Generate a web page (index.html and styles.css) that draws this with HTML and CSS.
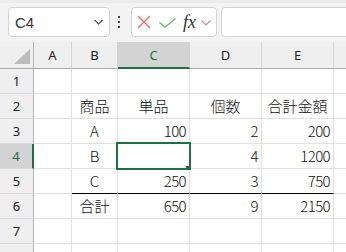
FILE: index.html
```html
<!DOCTYPE html>
<html lang="ja">
<head>
    <meta charset="UTF-8">
    <title>Sheet</title>
    <link rel="stylesheet" href="styles.css">
</head>
<body>
    <div class="toolbar">
        <div class="namebox">
            <span>C4</span>
            <svg class="caret" width="9" height="6" viewBox="0 0 9 6"><path d="M0.5 0.8 L4.5 4.8 L8.5 0.8" fill="none" stroke="#444" stroke-width="1.2"/></svg>
        </div>
        <div class="grip"><i></i><i></i><i></i></div>
        <div class="fbtns">
            <svg class="cancel" width="14" height="14" viewBox="0 0 14 14"><path d="M1 1 L13 13 M13 1 L1 13" stroke="#e86a6a" stroke-width="1.3" fill="none"/></svg>
            <svg class="enter" width="17" height="10" viewBox="0 0 17 10"><path d="M0.5 4.5 L6 9.2 L16.5 0.6" stroke="#5cb86a" stroke-width="1.3" fill="none"/></svg>
            <span class="fx">fx</span>
            <svg class="fxcaret" width="10" height="6" viewBox="0 0 10 6"><path d="M0.5 0.7 L5 5 L9.5 0.7" fill="none" stroke="#9a9a9a" stroke-width="1.1"/></svg>
        </div>
        <div class="finput"></div>
    </div>

    <div class="sheet">
        <div class="corner"><svg width="17" height="16" viewBox="0 0 17 16"><polygon points="16,0 16,15 0,15" fill="#bdbdbd"/></svg></div>
        <div class="hd">A</div>
        <div class="hd">B</div>
        <div class="hd active">C</div>
        <div class="hd">D</div>
        <div class="hd">E</div>
        <div class="hd"></div>

        <div class="rh">1</div>
        <div class="c"></div><div class="c"></div><div class="c"></div><div class="c"></div><div class="c"></div><div class="c"></div>

        <div class="rh">2</div>
        <div class="c"></div>
        <div class="c ctr">商品</div>
        <div class="c ctr">単品</div>
        <div class="c ctr">個数</div>
        <div class="c ctr">合計金額</div>
        <div class="c"></div>

        <div class="rh">3</div>
        <div class="c"></div>
        <div class="c ctr">A</div>
        <div class="c num">100</div>
        <div class="c num">2</div>
        <div class="c num">200</div>
        <div class="c"></div>

        <div class="rh active">4</div>
        <div class="c"></div>
        <div class="c ctr">B</div>
        <div class="c num"></div>
        <div class="c num">4</div>
        <div class="c num">1200</div>
        <div class="c"></div>

        <div class="rh">5</div>
        <div class="c"></div>
        <div class="c ctr rule">C</div>
        <div class="c num rule">250</div>
        <div class="c num rule">3</div>
        <div class="c num rule">750</div>
        <div class="c"></div>

        <div class="rh">6</div>
        <div class="c"></div>
        <div class="c ctr">合計</div>
        <div class="c num">650</div>
        <div class="c num">9</div>
        <div class="c num">2150</div>
        <div class="c"></div>

        <div class="rh">7</div>
        <div class="c"></div><div class="c"></div><div class="c"></div><div class="c"></div><div class="c"></div><div class="c"></div>

        <div class="rh"></div>
        <div class="c"></div><div class="c"></div><div class="c"></div><div class="c"></div><div class="c"></div><div class="c"></div>

        <div class="cursor"><i class="handle"></i></div>
    </div>
</body>
</html>
```

FILE: styles.css
```css
body {
    margin: 0;
    width: 346px;
    height: 252px;
    overflow: hidden;
    background-color: #ffffff;
    font-family: 'Noto Sans', sans-serif;
}
.toolbar {
    height: 42px;
    box-sizing: border-box;
    display: flex;
    align-items: flex-start;
    padding: 4px 0 0 8px;
    background-color: #f3f3f3;
    border-top: 3px solid #ebebeb;
    white-space: nowrap;
    overflow: hidden;
}
.namebox {
    width: 102px;
    height: 30px;
    box-sizing: border-box;
    flex-shrink: 0;
    display: flex;
    align-items: center;
    justify-content: space-between;
    padding: 0 6px;
    background-color: #ffffff;
    border: 1px solid #d4d4d4;
    border-radius: 4px;
    font-family: 'Liberation Sans', sans-serif;
    font-size: 15px;
    color: #333;
}
.grip {
    width: 2px;
    height: 30px;
    flex-shrink: 0;
    display: flex;
    flex-direction: column;
    justify-content: center;
    gap: 3px;
    margin: 0 11px 0 8px;
}
.grip i {
    display: block;
    width: 2px;
    height: 2px;
    background-color: #444;
}
.fbtns {
    width: 86px;
    height: 30px;
    box-sizing: border-box;
    flex-shrink: 0;
    display: flex;
    align-items: center;
    background-color: #ffffff;
    border: 1px solid #d4d4d4;
    border-radius: 4px;
}
.cancel {
    margin-left: 5px;
}
.enter {
    margin-left: 8px;
    margin-top: 1px;
}
.fx {
    margin-left: 7px;
    font-family: 'Liberation Serif', serif;
    font-style: italic;
    font-size: 18px;
    color: #333;
    line-height: 1;
}
.fxcaret {
    margin-left: 5px;
    margin-top: 2px;
}
.finput {
    width: 140px;
    height: 30px;
    box-sizing: border-box;
    flex-shrink: 0;
    margin-left: 4px;
    background-color: #ffffff;
    border: 1px solid #d4d4d4;
    border-radius: 4px;
}
.sheet {
    position: relative;
    display: grid;
    grid-template-columns: 34px 38px 46px 72px 72px 72px 72px;
    grid-template-rows: 27px repeat(8, 25px);
}
.sheet > div {
    box-sizing: border-box;
    display: flex;
    align-items: center;
    overflow: hidden;
}
.corner {
    background-color: #efefef;
    border-right: 1px solid #b4b4b4;
    border-bottom: 1px solid #ababab;
    justify-content: flex-end;
    padding: 3px 2px 0 0;
}
.hd {
    justify-content: center;
    background-color: #efefef;
    border-right: 1px solid #d4d4d4;
    border-bottom: 1px solid #ababab;
    font-size: 13px;
    color: #222;
}
.hd.active {
    background-color: #d3d3d3;
    border-bottom: 2px solid #1e7145;
    color: #1e7145;
}
.rh {
    justify-content: center;
    background-color: #efefef;
    border-right: 1px solid #b4b4b4;
    border-bottom: 1px solid #d8d8d8;
    font-size: 13px;
    color: #222;
}
.rh.active {
    background-color: #d3d3d3;
    border-right: 2px solid #1e7145;
    color: #1e7145;
}
.c {
    border-right: 1px solid #e1e1e1;
    border-bottom: 1px solid #e1e1e1;
    padding: 0 3px;
    font-family: 'Noto Sans CJK JP', sans-serif;
    font-weight: 300;
    font-size: 15px;
    line-height: 24px;
    color: #111;
}
.ctr {
    justify-content: center;
}
.num {
    justify-content: flex-end;
    letter-spacing: -0.6px;
}
.rule {
    border-bottom: 1px solid #000;
}
.cursor {
    position: absolute;
    left: 116px;
    top: 100px;
    width: 75px;
    height: 28px;
    box-sizing: border-box;
    border: 2px solid #1e7145;
}
.handle {
    position: absolute;
    left: 67px;
    top: 21px;
    width: 5px;
    height: 5px;
    background-color: #1e7145;
    border: 1px solid #ffffff;
}
```
